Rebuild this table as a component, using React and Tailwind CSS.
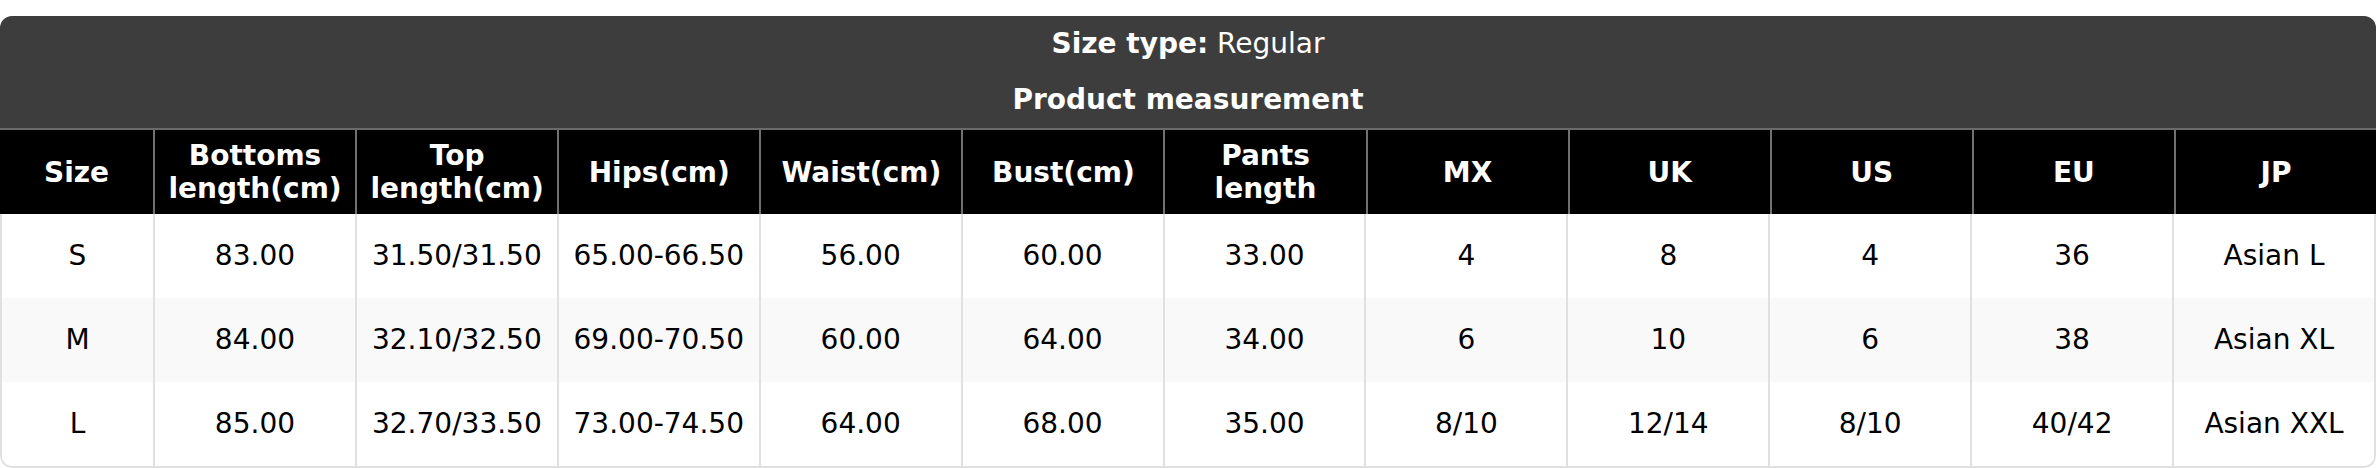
import React from "react";

const headers = [
  "Size",
  "Bottoms length(cm)",
  "Top length(cm)",
  "Hips(cm)",
  "Waist(cm)",
  "Bust(cm)",
  "Pants length",
  "MX",
  "UK",
  "US",
  "EU",
  "JP",
];

const rows = [
  ["S", "83.00", "31.50/31.50", "65.00-66.50", "56.00", "60.00", "33.00", "4", "8", "4", "36", "Asian L"],
  ["M", "84.00", "32.10/32.50", "69.00-70.50", "60.00", "64.00", "34.00", "6", "10", "6", "38", "Asian XL"],
  ["L", "85.00", "32.70/33.50", "73.00-74.50", "64.00", "68.00", "35.00", "8/10", "12/14", "8/10", "40/42", "Asian XXL"],
];

export default function App() {
  return (
    <div
      className="w-[2376px] h-[468px] bg-white pt-[16px]"
      style={{ fontFamily: '"DejaVu Sans", Verdana, sans-serif' }}
    >
      <div className="rounded-[12px] overflow-hidden">
        <div className="bg-[#3d3d3d] text-white text-[28px] leading-[32px]">
          <div className="h-[56px] flex items-center justify-center">
            <span>
              <span className="font-bold">Size type:</span> Regular
            </span>
          </div>
          <div className="h-[56px] flex items-center justify-center font-bold">
            Product measurement
          </div>
        </div>
        <div className="grid grid-cols-[153px_repeat(11,minmax(0,1fr))] bg-black border-t-2 border-[#6a6a6a]">
          {headers.map((h, i) => (
            <div
              key={h}
              className={`h-[84px] flex items-center justify-center text-center px-2 text-white font-bold text-[28px] leading-[33px] ${
                i > 0 ? "border-l-2 border-[#707070]" : ""
              }`}
            >
              {h}
            </div>
          ))}
        </div>
        <div className="border-x-2 border-b-2 border-[#e0e0e0] rounded-b-[12px] overflow-hidden">
          {rows.map((r, ri) => (
            <div
              key={ri}
              className={`grid grid-cols-[151px_repeat(11,minmax(0,1fr))] ${
                ri === 1 ? "bg-[#f9f9f9]" : "bg-white"
              }`}
            >
              {r.map((c, ci) => (
                <div
                  key={ci}
                  className={`h-[84px] flex items-center justify-center text-center text-black text-[28px] leading-[32px] ${
                    ci > 0 ? "border-l-2 border-[#e0e0e0]" : ""
                  }`}
                >
                  {c}
                </div>
              ))}
            </div>
          ))}
        </div>
      </div>
    </div>
  );
}
